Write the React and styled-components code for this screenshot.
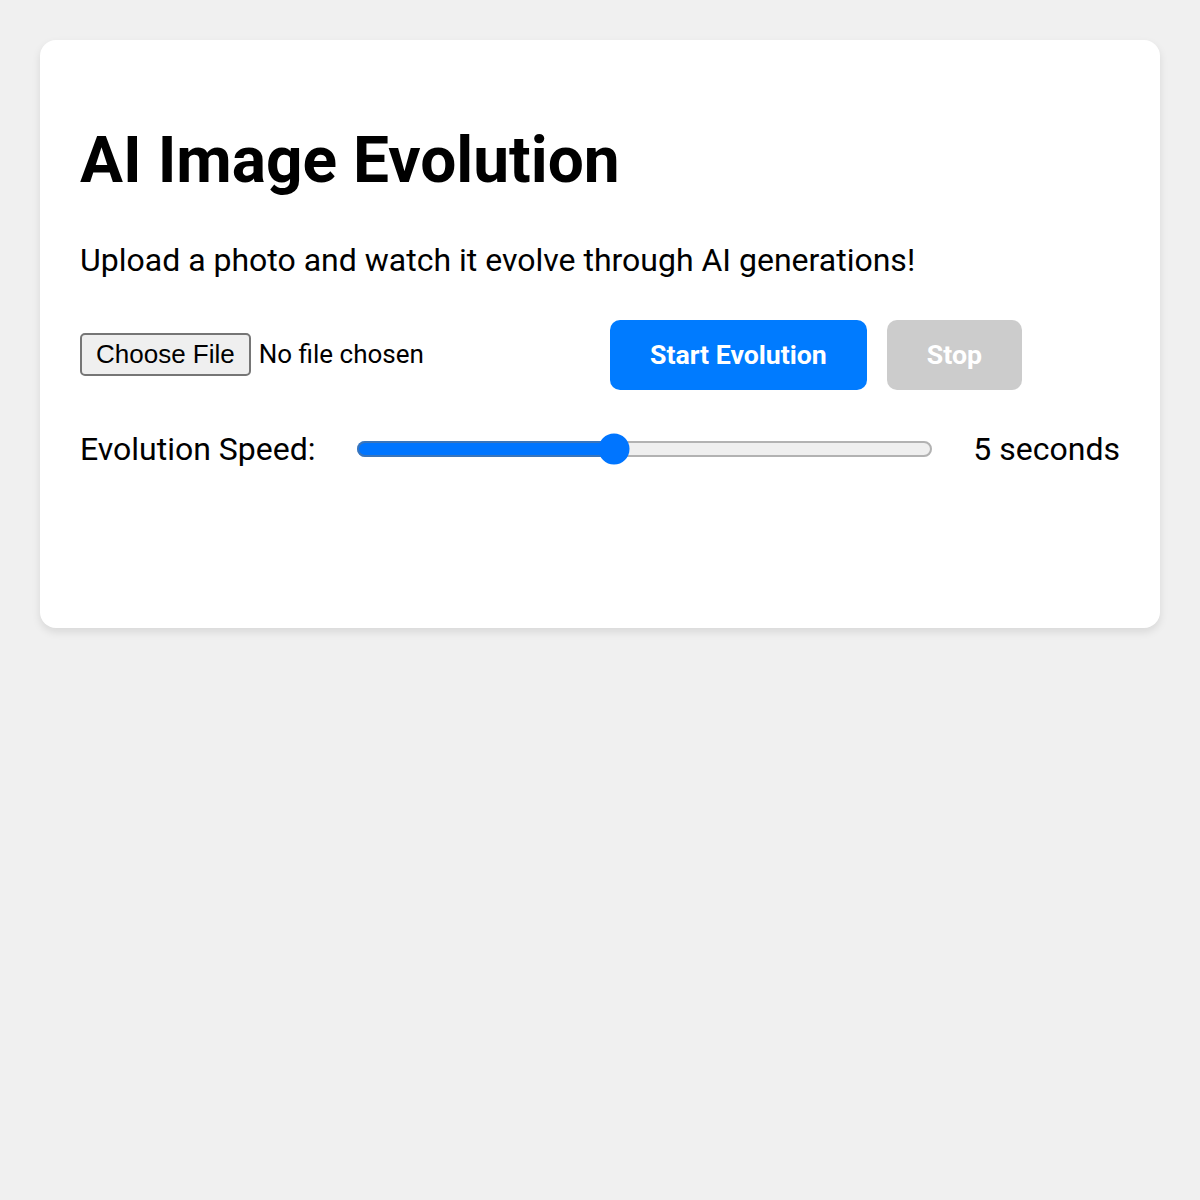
import React, { useState } from "react";
import styled, { createGlobalStyle } from "styled-components";

// the reference was shot at twice the css size, so the page is zoomed
const GlobalStyle = createGlobalStyle`
  html {
    zoom: 2;
  }
  body {
    margin: 0;
    padding: 20px;
    background: #f0f0f0;
    font-family: Roboto, "Liberation Sans", Arial, sans-serif;
  }
`;

const Card = styled.div`
  background: #fff;
  border-radius: 8px;
  padding: 20px;
  box-shadow: 0 2px 4px rgba(0, 0, 0, 0.1);
`;

const Title = styled.h1`
  font-size: 2em;
  margin: 0.67em 0;
  color: #000;
`;

const Intro = styled.p`
  font-size: 16px;
  margin: 16px 0;
`;

const Controls = styled.div`
  display: flex;
  align-items: center;
  gap: 10px;
  margin: 20.5px 0 19.5px;
`;

const FileInput = styled.input`
  font-family: Roboto, "Liberation Sans", Arial, sans-serif;
  font-size: 13px;
  width: 255px;
`;

const Button = styled.button`
  font-family: Roboto, "Liberation Sans", Arial, sans-serif;
  font-weight: bold;
  line-height: 15px;
  padding: 10px 20px;
  border: none;
  border-radius: 5px;
  color: #fff;
  background: ${(p) => (p.disabled ? "#ccc" : "#007bff")};
  cursor: ${(p) => (p.disabled ? "not-allowed" : "pointer")};
`;

const SpeedRow = styled.div`
  display: flex;
  align-items: center;
  gap: 20px;
  font-size: 16px;
`;

const Slider = styled.input`
  flex: 1;
  margin: 2px 0;
`;

const Gallery = styled.div`
  margin-top: 20px;
  min-height: 39.5px;
`;

export default function App() {
  const [speed, setSpeed] = useState(5);

  return (
    <>
      <GlobalStyle />
      <Card>
        <Title>AI Image Evolution</Title>
        <Intro>Upload a photo and watch it evolve through AI generations!</Intro>
        <Controls>
          <FileInput type="file" accept="image/*" />
          <Button>Start Evolution</Button>
          <Button disabled>Stop</Button>
        </Controls>
        <SpeedRow>
          <label>Evolution Speed:</label>
          <Slider
            type="range"
            min="1"
            max="10"
            value={speed}
            onChange={(e) => setSpeed(Number(e.target.value))}
          />
          <span>{speed} seconds</span>
        </SpeedRow>
        <Gallery />
      </Card>
    </>
  );
}
